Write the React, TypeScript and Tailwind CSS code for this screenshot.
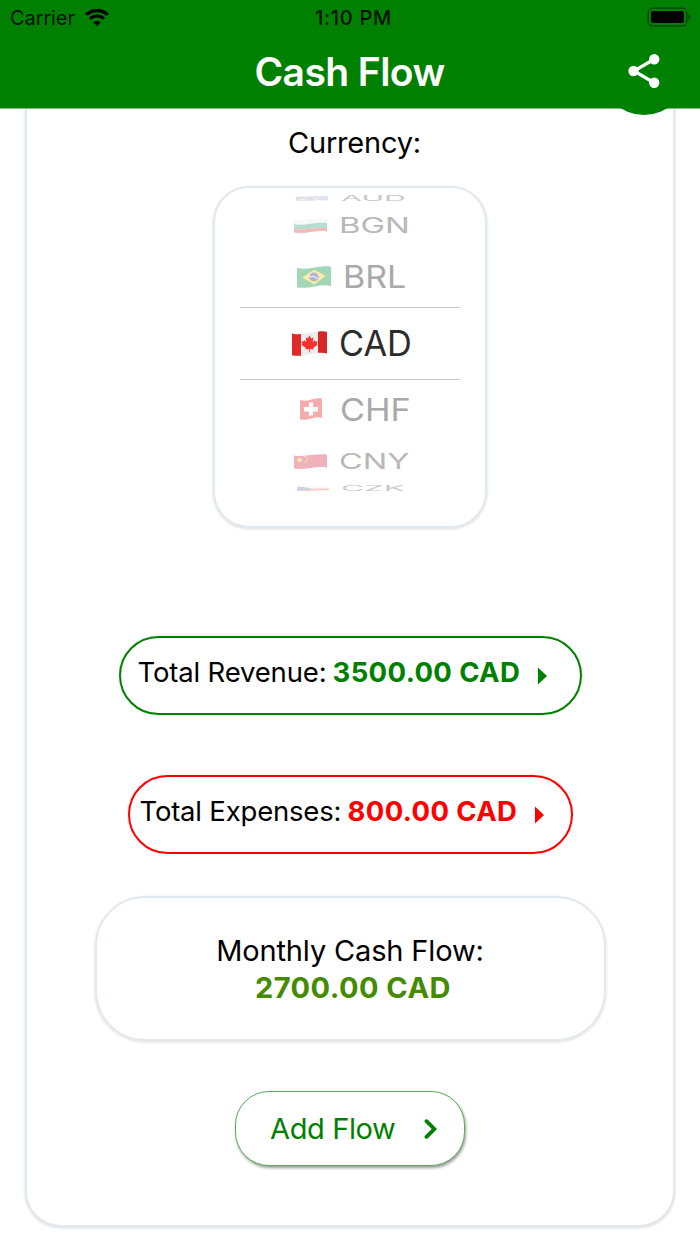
import type { ReactNode } from "react";
import clsx from "clsx";

const LEAF =
  "M17.5 4.2 L19.2 7.4 L21.4 6.6 L20.7 11 L22.8 9.2 L23.4 10.5 L25.6 10.2 L24.7 12.9 L25.6 13.7 L21.2 17 L21.6 18.6 L17.9 18 L17.9 21.2 H17.1 L17.1 18 L13.4 18.6 L13.8 17 L9.4 13.7 L10.3 12.9 L9.4 10.2 L11.6 10.5 L12.2 9.2 L14.3 11 L13.6 6.6 L15.8 7.4 Z";

const FLAGS: Record<string, ReactNode> = {
  AUD: (
    <>
      <rect width="35" height="25" fill="#7d8fc4" />
      <path d="M0 6H16M7 0V13" stroke="#e9586b" strokeWidth="4" />
      <circle cx="26" cy="7" r="2" fill="#fff" />
      <circle cx="22" cy="15" r="2" fill="#fff" />
      <circle cx="8" cy="19" r="3" fill="#fff" />
    </>
  ),
  BGN: (
    <>
      <rect width="35" height="25" fill="#ececec" />
      <path d="M0 10.5 C10 13 22 6.5 35 8 V17 C23 15.5 11 21.5 0 18.5 Z" fill="#2f9e76" />
      <path d="M0 18.5 C11 21.5 23 15.5 35 17 V25 H0 Z" fill="#e0382f" />
    </>
  ),
  BRL: (
    <>
      <rect width="35" height="25" fill="#169c4e" />
      <path d="M5.5 13 L17.5 4.2 L29.5 11.3 L17.5 21 Z" fill="#fbd116" />
      <circle cx="17.5" cy="12.5" r="5" fill="#3a46a8" />
      <path d="M12.7 12 Q17 10.5 22 14.5" stroke="#fff" strokeWidth="1" fill="none" />
    </>
  ),
  CAD: (
    <>
      <rect width="35" height="25" fill="#ececec" />
      <rect width="9" height="25" fill="#e0282a" />
      <rect x="26" width="9" height="25" fill="#d62828" />
      <path d={LEAF} fill="#f8312f" />
    </>
  ),
  CHF: (
    <>
      <rect width="35" height="25" fill="#e8323a" />
      <path d="M14.2 5 H20.8 V20 H14.2 Z" fill="#fff" />
      <path d="M6.5 10.2 H28.5 V15.2 H6.5 Z" fill="#fff" />
    </>
  ),
  CNY: (
    <>
      <rect width="35" height="25" fill="#d3263f" />
      <path d="M6 5 L7 8.5 L9.5 8.5 L7.5 10.5 L8.5 14 L6 12 L3.5 14 L4.5 10.5 L2.5 8.5 L5 8.5 Z" fill="#ffe012" />
      <path d="M11 4h1.5M13 7h1.5M13 11h1.5M11 14h1.5" stroke="#ffe012" strokeWidth="1.6" />
    </>
  ),
  CZK: (
    <>
      <rect width="35" height="25" fill="#f1f1f1" />
      <path d="M0 15 C10 17 22 11 35 13 V25 H0 Z" fill="#e0332f" />
      <path d="M0 0 L17 13 L0 25 Z" fill="#2b5d9e" />
    </>
  ),
};

interface CurrencyRow {
  code: string;
  row: string;
  flag: string;
  label: string;
}

// Rows tilt away from the selected one, so each gets its own squash.
const ABOVE: CurrencyRow[] = [
  { code: "AUD", row: "h-[12px] pl-[81px]", flag: "h-[5px] w-[32px] opacity-25", label: "ml-[13px] scale-x-[0.87] scale-y-[0.22] text-[#c8c8c8]" },
  { code: "BGN", row: "h-[42px] pl-[79px]", flag: "h-[15px] w-[33px] opacity-35", label: "ml-[12px] scale-x-[0.94] scale-y-[0.6] text-[#b8b8b8]" },
  { code: "BRL", row: "h-[61px] pl-[82px]", flag: "h-[22px] w-[34px] opacity-40", label: "ml-[12px] scale-x-[0.97] scale-y-[0.89] text-[#a9a9a9]" },
];

const SELECTED: CurrencyRow = {
  code: "CAD",
  row: "h-[71px] pl-[77px]",
  flag: "h-[25px] w-[35px]",
  label: "ml-[12px] scale-x-[0.98] text-[#2c2c2c]",
};

const BELOW: CurrencyRow[] = [
  { code: "CHF", row: "h-[58px] pl-[85px]", flag: "h-[22px] w-[22px] opacity-40", label: "ml-[18px] scale-x-[0.98] scale-y-[0.89] text-[#a9a9a9]" },
  { code: "CNY", row: "h-[46px] pl-[79px]", flag: "h-[15px] w-[33px] opacity-35", label: "ml-[12px] scale-x-[0.93] scale-y-[0.6] text-[#b8b8b8]" },
  { code: "CZK", row: "h-[8px] pl-[82px]", flag: "h-[5px] w-[32px] opacity-25", label: "ml-[12px] scale-x-[0.9] scale-y-[0.2] text-[#c8c8c8]" },
];

function PickerRow({ code, row, flag, label }: CurrencyRow) {
  return (
    <div className={clsx("flex items-center", row)}>
      <svg viewBox="0 0 35 25" preserveAspectRatio="none" className={clsx("shrink-0", flag)}>
        <defs>
          <clipPath id={`wave-${code}`}>
            <path d="M0 2.4 C6 4 12 3 18 1.8 S30 -0.5 35 0.8 V22.6 C30 21.2 24 22 18 23.2 S6 25.6 0 24.2 Z" />
          </clipPath>
        </defs>
        <g clipPath={`url(#wave-${code})`}>{FLAGS[code]}</g>
      </svg>
      <span className={clsx("origin-left text-[35px] leading-none", label)}>{code}</span>
    </div>
  );
}

function StatusBar() {
  return (
    <div className="grid h-9 grid-cols-3 items-center pr-[9px] pl-[10px] text-[20px] leading-none text-black/90">
      <div className="flex items-center gap-[10px]">
        <span className="tracking-[-0.1px]">Carrier</span>
        <svg viewBox="0 0 24 17" className="-mt-0.5 h-[17px] w-6 fill-none stroke-black">
          <path d="M1.2 5.9 A15.5 15.5 0 0 1 22.8 5.9" strokeWidth="3.3" />
          <path d="M5.1 9.8 A10 10 0 0 1 18.9 9.8" strokeWidth="3.1" />
          <path d="M12 17 L8.2 13.2 A5.4 5.4 0 0 1 15.8 13.2 Z" className="fill-black stroke-none" />
        </svg>
      </div>
      <span className="pl-[6px] text-center font-medium tracking-[0.75px]">1:10 PM</span>
      <svg viewBox="0 0 44 20" className="-mt-0.5 h-5 w-11 justify-self-end">
        <rect x="1.2" y="1.2" width="38.6" height="17.6" rx="4.5" fill="none" stroke="#000" strokeOpacity="0.5" strokeWidth="1.3" />
        <rect x="4" y="4" width="33" height="12" rx="2" fill="#000" />
        <path d="M41.5 7 Q43.5 8 43.5 10 T41.5 13 Z" fill="#000" fillOpacity="0.5" />
      </svg>
    </div>
  );
}

function Header() {
  return (
    <header className="relative z-10 h-[109px] border-b border-[#84c184] bg-[#008000]">
      <StatusBar />
      <div className="flex h-[70px] items-center justify-center pr-px">
        <h1 className="text-[39px] leading-none font-semibold tracking-[-0.57px] text-white">Cash Flow</h1>
      </div>
      <button
        aria-label="Share"
        className="absolute top-[29px] right-[13px] flex size-[86px] items-center justify-center rounded-full bg-[#008000] pb-0.5"
      >
        <svg viewBox="0 0 32 34" className="h-[34px] w-8 fill-white stroke-white">
          <path d="M26.5 5 L6 17 L26.5 29" fill="none" strokeWidth="3.2" />
          <circle cx="5.5" cy="17" r="5.2" stroke="none" />
          <circle cx="26.2" cy="5.2" r="5.2" stroke="none" />
          <circle cx="26.2" cy="28.8" r="5.2" stroke="none" />
        </svg>
      </button>
    </header>
  );
}

interface TotalPillProps {
  label: string;
  amount: string;
  className: string;
  labelClass: string;
  amountClass: string;
}

function TotalPill({ label, amount, className, labelClass, amountClass }: TotalPillProps) {
  return (
    <button
      className={clsx(
        "flex h-[79px] items-center rounded-full border-2 border-current pb-[6px] text-[27.5px] leading-none whitespace-nowrap shadow-[0_0_3px_rgba(0,0,0,0.12)]",
        className,
      )}
    >
      <span className={clsx("text-black", labelClass)}>{label}</span>
      <span className={clsx("font-bold", amountClass)}>{amount}</span>
      <svg viewBox="0 0 9 18" className="mt-[6px] h-[18px] w-[9px] fill-current">
        <path d="M0 0.5 L9 9 L0 17.5 Z" />
      </svg>
    </button>
  );
}

export default function App() {
  return (
    <div className="h-[1244px] overflow-hidden bg-white font-['Inter',sans-serif] text-black">
      <Header />
      <main className="mx-[25px] -mt-[60px] flex h-[1178px] flex-col items-center rounded-[36px] border-2 border-[#e1e8ee] bg-white pt-[74px] shadow-[0_1px_3px_rgba(0,0,0,0.15)]">
        <h2 className="pl-[9px] text-[29px] leading-9 tracking-[-0.2px]">Currency:</h2>

        <section className="mt-[25px] h-[342px] w-[274px] rounded-[36px] border-2 border-[#e1e8ee] pt-1 shadow-[0_1px_3px_rgba(0,0,0,0.15)]">
          {ABOVE.map((item) => (
            <PickerRow key={item.code} {...item} />
          ))}
          <div className="mx-[25px] h-px bg-[#c9c9c9]" />
          <PickerRow {...SELECTED} />
          <div className="mx-[25px] h-px bg-[#c9c9c9]" />
          {BELOW.map((item) => (
            <PickerRow key={item.code} {...item} />
          ))}
        </section>

        <div className="mt-[108px] flex flex-col items-center gap-[60px]">
          <TotalPill
            label="Total Revenue:"
            amount="3500.00 CAD"
            className="w-[463px] pl-[17px] text-[#008000]"
            labelClass="w-[195px] text-left tracking-[-0.17px]"
            amountClass="w-[205px] text-left tracking-[0.38px]"
          />
          <TotalPill
            label="Total Expenses:"
            amount="800.00 CAD"
            className="w-[445px] pl-[10px] text-[#ff0000]"
            labelClass="w-[208px] text-left tracking-[-0.2px]"
            amountClass="w-[187px] text-left tracking-[0.36px]"
          />
        </div>

        <section className="mt-[42px] flex h-[145px] w-[511px] flex-col items-center justify-center rounded-[50px] border-2 border-[#e1e8ee] text-[29px] leading-[37px] shadow-[0_1px_3px_rgba(0,0,0,0.15)]">
          <p className="tracking-[-0.15px]">Monthly Cash Flow:</p>
          <p className="pl-[6px] font-bold tracking-[0.45px] text-[#458b00]">2700.00 CAD</p>
        </section>

        <button className="mt-[50px] flex h-[75px] w-[230px] items-center rounded-[34px] border border-[#5cab5c] bg-white pl-[34px] text-[29px] leading-none text-[#008000] shadow-[1px_2px_3px_rgba(0,0,0,0.4)]">
          <span className="w-[154px] text-left tracking-[-0.38px]">Add Flow</span>
          <svg viewBox="0 0 13 20" className="h-5 w-[13px] fill-none stroke-current">
            <path d="M2.5 2.2 L10.3 10 L2.5 17.8" strokeWidth="3.8" strokeLinecap="round" strokeLinejoin="miter" />
          </svg>
        </button>
      </main>
    </div>
  );
}
